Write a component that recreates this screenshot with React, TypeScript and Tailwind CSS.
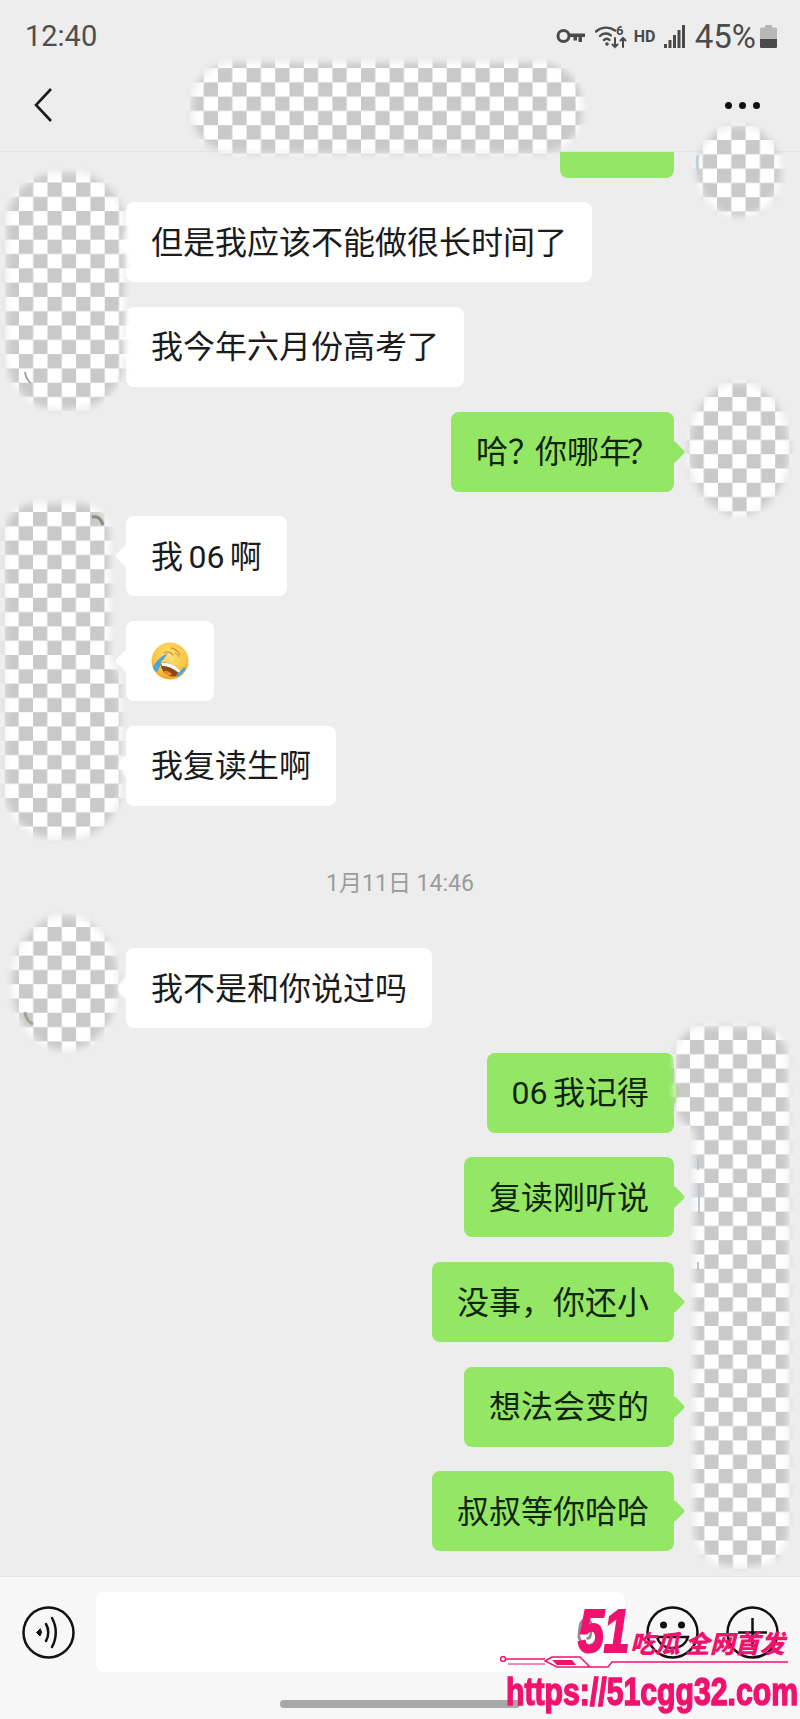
import type { ReactNode } from "react";

const cjk = "font-['Roboto','Noto_Sans_CJK_SC',sans-serif]";

type Blob = {
  id: string;
  ox: number;
  oy: number;
  shapes: ReactNode;
};

// censor blobs over title and avatars, each with its own checker origin
const blobs: Blob[] = [
  { id: "title", ox: 218, oy: 68, shapes: <rect x="192" y="63" width="390" height="90" rx="42" /> },
  { id: "me1", ox: 717, oy: 140, shapes: <ellipse cx="739" cy="171" rx="42" ry="45" /> },
  { id: "left1", ox: 47.5, oy: 182.5, shapes: <rect x="7" y="173" width="117" height="236" rx="52" /> },
  { id: "me2", ox: 718, oy: 397, shapes: <ellipse cx="739" cy="449" rx="50" ry="66" /> },
  {
    id: "left2",
    ox: 33,
    oy: 512,
    shapes: (
      <>
        <rect x="5" y="504" width="104" height="260" rx="30" />
        <rect x="5" y="640" width="115" height="198" rx="50" />
      </>
    ),
  },
  { id: "left3", ox: 47.5, oy: 927, shapes: <ellipse cx="65" cy="983" rx="53" ry="67" /> },
  {
    id: "me3",
    ox: 690,
    oy: 1040,
    shapes: (
      <>
        <rect x="675" y="1027" width="112" height="104" rx="30" />
        <rect x="695" y="1060" width="93" height="506" rx="36" />
      </>
    ),
  },
];

function Censor() {
  return (
    <svg className="absolute inset-0 w-[800px] h-[1719px] pointer-events-none" viewBox="0 0 800 1719">
      <defs>
        <filter id="feather" filterUnits="userSpaceOnUse" x="0" y="0" width="800" height="1719">
          <feGaussianBlur stdDeviation="3.5" />
        </filter>
        {blobs.map((b) => (
          <pattern key={b.id} id={`check-${b.id}`} patternUnits="userSpaceOnUse" x={b.ox} y={b.oy} width="28.6" height="28.6">
            <rect width="28.6" height="28.6" fill="#ffffff" />
            <rect width="14.3" height="14.3" fill="#c9c9c9" />
            <rect x="14.3" y="14.3" width="14.3" height="14.3" fill="#c9c9c9" />
          </pattern>
        ))}
        {blobs.map((b) => (
          <mask key={b.id} id={`mask-${b.id}`} maskUnits="userSpaceOnUse" x="0" y="0" width="800" height="1719">
            <g fill="#ffffff" filter="url(#feather)">
              {b.shapes}
            </g>
          </mask>
        ))}
      </defs>
      {blobs.map((b) => (
        <rect key={b.id} width="800" height="1719" fill={`url(#check-${b.id})`} mask={`url(#mask-${b.id})`} />
      ))}
      {/* bits of the avatars that peek out past the checker */}
      <path d="M92 517q8-2 11 8" fill="none" stroke="#8f8a80" strokeWidth="3" />
      <path d="M25 1012q1 9 8 12" fill="none" stroke="#a8a39a" strokeWidth="3" />
      <path d="M25 372q1 8 6 11" fill="none" stroke="#a8a39a" strokeWidth="2" />
      <path d="M698 155q-2 9 1 20" fill="none" stroke="#c3d0da" strokeWidth="3" />
      <path d="M698 1158v12M699 1185v28M698 1262v8" fill="none" stroke="#b9c6d2" strokeWidth="2" />
    </svg>
  );
}

function Bubble({ side, children }: { side: "in" | "out"; children: ReactNode }) {
  const out = side === "out";
  return (
    <div className={out ? "flex justify-end pr-[126px]" : "flex justify-start pl-[126px]"}>
      <div
        className={`relative h-[80px] flex items-center px-[25px] rounded-[8px] text-[32px] leading-none whitespace-pre [word-spacing:-2.5px] ${
          out ? "bg-[#94e765] text-[#10240a]" : "bg-white text-[#1b1b1b]"
        }`}
      >
        <span
          className={`absolute top-[32px] w-[16px] h-[16px] rotate-45 rounded-[2px] ${
            out ? "-right-[8px] bg-[#94e765]" : "-left-[8px] bg-white"
          }`}
        />
        <span className="relative pt-[1px]">{children}</span>
      </div>
    </div>
  );
}

function CryLaugh() {
  return (
    <svg className="w-[38px] h-[38px]" viewBox="0 0 38 38">
      <defs>
        <radialGradient id="face" cx="50%" cy="35%" r="65%">
          <stop offset="0%" stopColor="#ffe27a" />
          <stop offset="70%" stopColor="#fcc63f" />
          <stop offset="100%" stopColor="#f0a024" />
        </radialGradient>
      </defs>
      <circle cx="19" cy="19" r="18.5" fill="url(#face)" />
      <g fill="none" stroke="#d39a3a" strokeWidth="1.3" strokeLinecap="round">
        <path d="M13 11q5-3 9 2" />
        <path d="M20 6q6 1 9 7" />
        <path d="M24 11q3 1 4 4" />
      </g>
      <path d="M9 21q10-3 22 9q-5 6-12 4q-8-2-10-13z" fill="#8a4a14" />
      <path d="M10 21q10-2 20 8l-2 2q-10-8-17-7z" fill="#ffffff" />
      <path d="M13 29q4-1 8 3q-2 2-4 1q-3-1-4-4z" fill="#f08a2c" />
      <path d="M17 11q-5 2-10 7q-4 4-5 7q1 4 4 5q3-4 4-10q3-3 7-9z" fill="#4fa3dc" />
      <path d="M27 35q4-3 8-8l-2-2q-3 4-8 8z" fill="#4fa3dc" />
    </svg>
  );
}

function StatusIcons() {
  return (
    <div className="flex items-center text-[#4a4a4a]">
      <svg className="w-[29px] h-[17px]" viewBox="0 0 29 17" fill="none" stroke="currentColor" strokeWidth="3">
        <circle cx="7.500" cy="8" r="5.500" />
        <path d="M13 5.500h16v3.500h-3v5h-3.500V9h-1.500v3.500h-3.500V9H13z" fill="currentColor" stroke="none" />
      </svg>
      <svg className="ml-[10px] w-[33px] h-[25px]" viewBox="0 0 33 25" fill="none" stroke="currentColor" strokeLinecap="round">
        <path d="M1 7.500C6 3 14 2 20 6.500" strokeWidth="2.400" />
        <path d="M5 12c3-3 8-3.500 11-.5" strokeWidth="2.400" />
        <path d="M9 16c2-1.500 4-1.500 5.500 0" strokeWidth="2.400" />
        <circle cx="12" cy="20" r="1.800" fill="currentColor" stroke="none" />
        <text x="21" y="11" fontSize="13" fontWeight="700" fill="currentColor" stroke="none" fontFamily="Roboto, sans-serif">6</text>
        <path d="M20 14v9M17.500 20.500l2.500 2.500 2.500-2.500M28 23v-9M25.500 16.500l2.500-2.500 2.500 2.500" strokeWidth="2" />
      </svg>
      <span className="ml-[6px] w-[21px] text-[16px] leading-none font-bold font-['Roboto',sans-serif]">HD</span>
      <svg className="ml-[9px] w-[22px] h-[23px]" viewBox="0 0 22 23" fill="currentColor">
        <rect x="0" y="19" width="3" height="4" />
        <rect x="4.500" y="15" width="3" height="8" />
        <rect x="9" y="10" width="3" height="13" />
        <rect x="13.500" y="5" width="3" height="18" />
        <rect x="18" y="0" width="3" height="23" />
      </svg>
      <span className="ml-[9px] text-[33px] leading-none font-['Roboto',sans-serif]">45%</span>
      <svg className="ml-[4px] w-[17px] h-[23px]" viewBox="0 0 17 23">
        <path d="M5 0h7v2.500h3.500a1.500 1.500 0 0 1 1.500 1.500v17.500a1.500 1.500 0 0 1-1.500 1.500h-14a1.500 1.500 0 0 1-1.500-1.500V4a1.500 1.500 0 0 1 1.500-1.500H5z" fill="#b8b8b8" />
        <path d="M0 14h17v7.500a1.500 1.500 0 0 1-1.500 1.500h-14a1.500 1.500 0 0 1-1.500-1.500z" fill="#4a4a4a" />
      </svg>
    </div>
  );
}

function Watermark() {
  return (
    <div className="absolute left-[500px] top-[1606px] w-[300px] text-[#f0126f] pointer-events-none">
      <div className="flex items-end h-[50px] pl-[78px] italic font-['Liberation_Sans','Noto_Sans_CJK_SC',sans-serif]">
        <span className="w-[52px] origin-left scale-x-[0.76] text-[62px] leading-[50px] font-bold tracking-[-1px] [-webkit-text-stroke:2px_#f0126f]">51</span>
        <span className="text-[25px] leading-[28px] font-black font-['Noto_Sans_CJK_SC',sans-serif] whitespace-pre [word-spacing:-1px]">吃瓜 全网首发</span>
      </div>
      <svg className="block w-[300px] h-[16px]" viewBox="0 0 300 16" fill="none" stroke="currentColor" strokeWidth="1.500">
        <circle cx="3" cy="3" r="2.500" />
        <path d="M6 3h39M45 5l7-4h28l10 10H57L45 5zM90 11h18l4-5h176" />
        <path d="M8 8h37" strokeWidth="1" />
        <path d="M52 4h20l4 5H57z" fill="currentColor" stroke="none" />
      </svg>
      <div className="pl-[6px] w-[300px]">
        <div className="origin-left scale-x-[0.795] text-[38px] leading-[40px] font-bold whitespace-nowrap font-['Liberation_Sans',sans-serif] [-webkit-text-stroke:1.5px_#f0126f]">
          https://51cgg32.com
        </div>
      </div>
    </div>
  );
}

export default function App() {
  return (
    <main className={`relative flex flex-col w-[800px] h-[1719px] overflow-hidden bg-[#ededed] ${cjk}`}>
      <header className="shrink-0 h-[152px] border-b border-[#e4e4e4]">
        <div className="flex items-center justify-between h-[73px] pl-[25px] pr-[23px]">
          <span className="text-[29px] leading-none text-[#4f4f4f]">12:40</span>
          <StatusIcons />
        </div>
        <div className="flex items-center justify-between h-[64px] pl-[33px] pr-[40px]">
          <svg className="w-[20px] h-[36px]" viewBox="0 0 20 36" fill="none" stroke="#1c1c1c" strokeWidth="2.600">
            <path d="M18 2 3 18l15 16" />
          </svg>
          <div className="flex gap-[7px]">
            <span className="w-[7px] h-[7px] rounded-full bg-[#111]" />
            <span className="w-[7px] h-[7px] rounded-full bg-[#111]" />
            <span className="w-[7px] h-[7px] rounded-full bg-[#111]" />
          </div>
        </div>
      </header>

      <section className="flex-1 min-h-0 overflow-hidden">
        <div className="flex flex-col gap-[24.7px] -mt-[54.5px]">
          <Bubble side="out">嗯嗯</Bubble>
          <Bubble side="in">但是我应该不能做很长时间了</Bubble>
          <Bubble side="in">我今年六月份高考了</Bubble>
          <Bubble side="out">
            哈<span className="tracking-[-5px]">？</span>你哪年<span className="-ml-[4px] tracking-[-10px]">？</span>
          </Bubble>
          <Bubble side="in">我 06 啊</Bubble>
          <Bubble side="in">
            <span className="flex w-[38px] h-[38px]">
              <CryLaugh />
            </span>
          </Bubble>
          <Bubble side="in">我复读生啊</Bubble>
          <div className="flex items-center justify-center h-[93px] pt-[14px] text-[23px] leading-none text-[#9c9c9c]">1月11日 14:46</div>
          <Bubble side="in">我不是和你说过吗</Bubble>
          <Bubble side="out">06 我记得</Bubble>
          <Bubble side="out">复读刚听说</Bubble>
          <Bubble side="out">没事，你还小</Bubble>
          <Bubble side="out">想法会变的</Bubble>
          <Bubble side="out">叔叔等你哈哈</Bubble>
        </div>
      </section>

      <footer className="shrink-0 h-[143px] bg-[#f7f7f7] border-t border-[#e8e8e8]">
        <div className="flex items-center h-[80px] mt-[15px] pl-[22px] pr-[21px]">
          <svg className="shrink-0 w-[53px] h-[53px]" viewBox="0 0 53 53" fill="none" stroke="#111" strokeWidth="2.500" strokeLinecap="round">
            <circle cx="26.500" cy="26.500" r="25" />
            <path d="M18 23l-3.500 3.500 3.500 3.500 1.500-3.500z" fill="#111" strokeWidth="1" />
            <path d="M24 18c3 5 3 12 0 17" />
            <path d="M30 12c5 9 5 20 0 29" />
          </svg>
          <div className="flex-1 h-[80px] mx-[21px] flex items-center justify-end pr-[24px] rounded-[8px] bg-white">
            <svg className="w-[26px] h-[32px]" viewBox="0 0 26 32" fill="none" stroke="#8d8d8d" strokeWidth="2.600" strokeLinecap="round">
              <path d="M22 21c-1 6-5 9-10 8S3 23 4 18l1-8c.5-4 3-7 6.500-6.500S17 7 16.500 11l-1 8c-.3 2-1.500 3.500-3 3.300" />
            </svg>
          </div>
          <svg className="shrink-0 w-[53px] h-[53px]" viewBox="0 0 53 53" fill="none" stroke="#111" strokeWidth="2.500">
            <circle cx="26.500" cy="26.500" r="25" />
            <circle cx="17.500" cy="19" r="3.500" fill="#111" stroke="none" />
            <circle cx="35.500" cy="19" r="3.500" fill="#111" stroke="none" />
            <path d="M11 31h31c-2 7-8 11-15.500 11S13 38 11 31z" />
          </svg>
          <svg className="shrink-0 ml-[27px] w-[53px] h-[53px]" viewBox="0 0 53 53" fill="none" stroke="#111" strokeWidth="2.500">
            <circle cx="26.500" cy="26.500" r="25" />
            <path d="M26.500 12v29M12 26.500h29" />
          </svg>
        </div>
        <div className="mx-auto mt-[28px] w-[240px] h-[8px] rounded-full bg-[#a8a8a8]" />
      </footer>

      <Censor />
      <Watermark />
    </main>
  );
}
